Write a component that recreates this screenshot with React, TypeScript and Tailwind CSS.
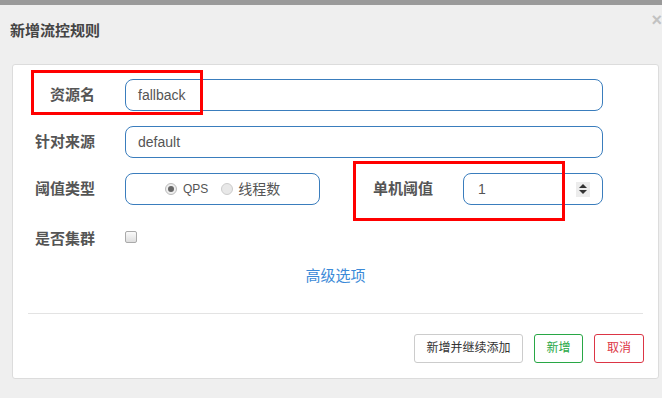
import React from "react";

const font = "font-['Liberation_Sans','Noto_Sans_CJK_SC',sans-serif]";

function Field({ label, value }: { label: string; value: string }) {
  return (
    <div className="flex items-center">
      <div className="w-[82px] text-right text-[15px] font-bold text-[#555]">{label}</div>
      <div className="ml-[30px] flex h-[32px] w-[478px] items-center rounded-lg border border-[#3a7dbd] px-[12px] text-[14px] text-[#555]">
        {value}
      </div>
    </div>
  );
}

export default function App() {
  return (
    <div className={`relative h-[398px] w-[662px] overflow-hidden bg-[#efefef] ${font}`}>
      <div className="h-[5px] bg-[#9a9a9a]" />
      <div className="flex h-[59px] items-center pl-[10px] pb-[6px] text-[15px] font-bold text-[#444]">新增流控规则</div>
      <span className="absolute right-[0px] top-[11px] text-[18px] font-bold leading-none text-[#c2c2c2]">×</span>

      <div className="ml-[12px] h-[315px] w-[647px] rounded-[3px] border border-[#dcdcdc] bg-white pt-[14px]">
        <div className="flex flex-col gap-[15px]">
          <Field label="资源名" value="fallback" />
          <Field label="针对来源" value="default" />
          <div className="flex items-center">
            <div className="w-[82px] text-right text-[15px] font-bold text-[#555]">阈值类型</div>
            <div className="ml-[30px] flex h-[32px] w-[195px] items-center rounded-lg border border-[#3a7dbd] pl-[39px]">
              <span className="flex h-[12px] w-[12px] items-center justify-center rounded-full border border-[#bbb] bg-[#eee]">
                <span className="h-[6px] w-[6px] rounded-full bg-[#666]" />
              </span>
              <span className="ml-[6px] text-[12px] text-[#555]">QPS</span>
              <span className="ml-[13px] h-[12px] w-[12px] rounded-full border border-[#ccc] bg-[#e8e8e8]" />
              <span className="ml-[5px] text-[14px] text-[#555]">线程数</span>
            </div>
            <div className="w-[113px] text-right text-[15px] font-bold text-[#555]">单机阈值</div>
            <div className="ml-[30px] flex h-[32px] w-[140px] items-center justify-between rounded-lg border border-[#3a7dbd] pl-[14px] pr-[12px] text-[14px] text-[#555]">
              <span>1</span>
              <span className="flex h-[15px] w-[14px] flex-col items-center justify-center gap-[2px] bg-[#ececec]">
                <svg width="8" height="4" viewBox="0 0 8 4"><path d="M0 4 L4 0 L8 4 Z" fill="#333" /></svg>
                <svg width="8" height="4" viewBox="0 0 8 4"><path d="M0 0 L8 0 L4 4 Z" fill="#333" /></svg>
              </span>
            </div>
          </div>
          <div className="flex h-[38px] items-center">
            <div className="w-[82px] text-right text-[15px] font-bold text-[#555]">是否集群</div>
            <span className="ml-[30px] mt-[-5px] h-[12px] w-[12px] rounded-[2px] border border-[#aaa] bg-gradient-to-b from-[#fafafa] to-[#dedede]" />
          </div>
        </div>
        <div className="mt-[7px] text-center text-[15px] text-[#3b8ad8]">高级选项</div>
        <div className="mx-[15px] mt-[25px] h-px bg-[#e3e3e3]" />
        <div className="mr-[14px] mt-[20px] flex justify-end gap-[11px] text-[12px]">
          <button className="h-[29px] w-[109px] rounded-[3px] border border-[#ccc] bg-white text-[#333]">新增并继续添加</button>
          <button className="h-[29px] w-[49px] rounded-[3px] border border-[#28a745] bg-white text-[#28a745]">新增</button>
          <button className="h-[29px] w-[50px] rounded-[3px] border border-[#dc3545] bg-white text-[#dc3545]">取消</button>
        </div>
      </div>

      <div className="absolute left-[31px] top-[70px] h-[45px] w-[172px] border-[3px] border-[#ff0000]" />
      <div className="absolute left-[353px] top-[161px] h-[60px] w-[212px] border-[3px] border-[#ff0000]" />
    </div>
  );
}
